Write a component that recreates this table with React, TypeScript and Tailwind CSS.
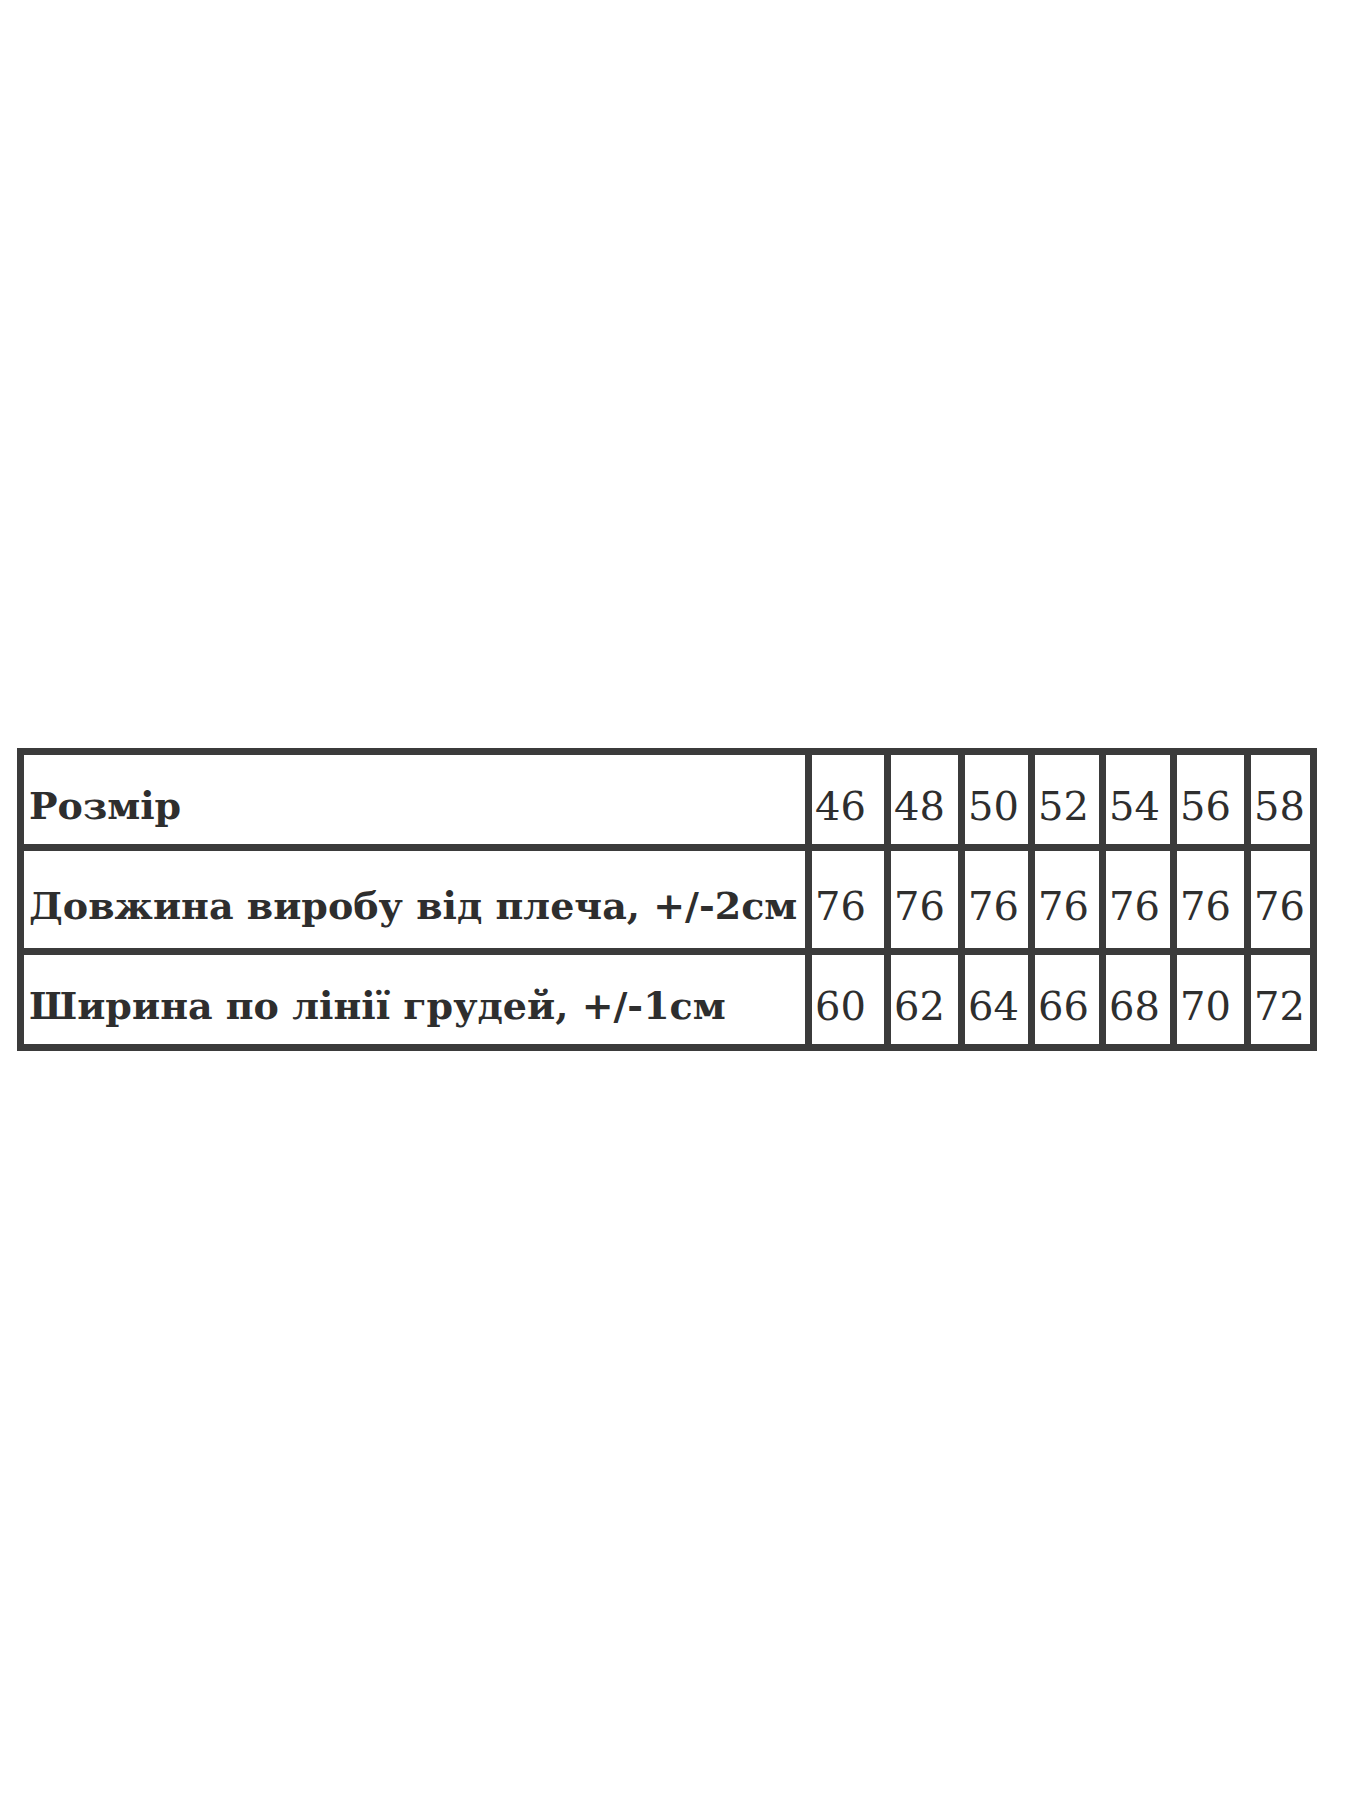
import React from "react";

const rows: string[][] = [
  ["Розмір", "46", "48", "50", "52", "54", "56", "58"],
  ["Довжина виробу від плеча, +/-2см", "76", "76", "76", "76", "76", "76", "76"],
  ["Ширина по лінії грудей, +/-1см", "60", "62", "64", "66", "68", "70", "72"],
];

export default function App() {
  return (
    <div className="w-[1350px] h-[1800px] bg-white pt-[748px] pl-[17px]">
      <div
        className="grid w-[1300px] gap-[7px] bg-[#3b3b3b] p-[7px] text-[#2e2e2e] grid-cols-[781px_72px_67px_63px_64px_64px_67px_59px] grid-rows-[89px_97px_89px]"
        style={{ fontFamily: '"DejaVu Serif", "Liberation Serif", serif' }}
      >
        {rows.map((r, ri) =>
          r.map((c, ci) => (
            <div
              key={ri + "-" + ci}
              className={
                "bg-white flex items-center pt-[12px] whitespace-nowrap overflow-hidden " +
                (ci === 0 ? "pl-[5px] text-[38px] font-bold" : "pl-[3px] text-[40px] font-normal")
              }
            >
              {c}
            </div>
          ))
        )}
      </div>
    </div>
  );
}
